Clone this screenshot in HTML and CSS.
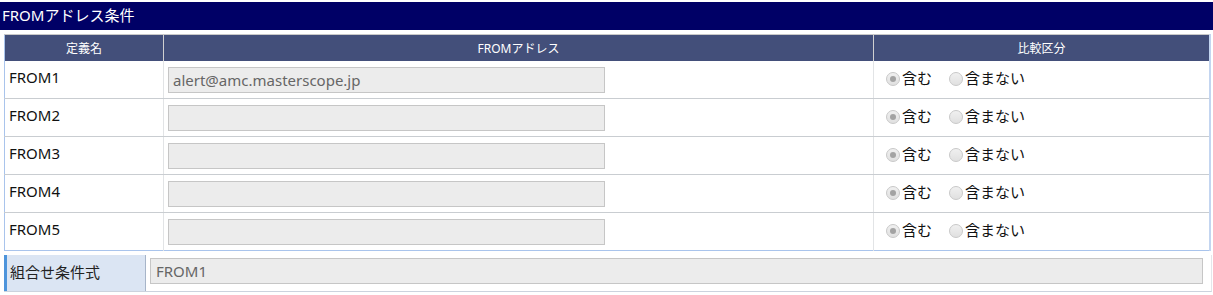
FILE: index.html
```html
<!DOCTYPE html>
<html lang="ja">
<head>
<meta charset="utf-8">
<link rel="stylesheet" href="styles.css">
</head>
<body>
<div class="title">FROMアドレス条件</div>
<table class="grid">
  <thead>
    <tr><th class="c1">定義名</th><th class="c2">FROMアドレス</th><th class="c3">比較区分</th></tr>
  </thead>
  <tbody>
    <tr><td class="name">FROM1</td><td><div class="field">alert@amc.masterscope.jp</div></td><td class="opts"><span class="radio on"></span><span class="rl">含む</span><span class="radio"></span><span class="rl">含まない</span></td></tr>
    <tr><td class="name">FROM2</td><td><div class="field"></div></td><td class="opts"><span class="radio on"></span><span class="rl">含む</span><span class="radio"></span><span class="rl">含まない</span></td></tr>
    <tr><td class="name">FROM3</td><td><div class="field"></div></td><td class="opts"><span class="radio on"></span><span class="rl">含む</span><span class="radio"></span><span class="rl">含まない</span></td></tr>
    <tr><td class="name">FROM4</td><td><div class="field"></div></td><td class="opts"><span class="radio on"></span><span class="rl">含む</span><span class="radio"></span><span class="rl">含まない</span></td></tr>
    <tr><td class="name">FROM5</td><td><div class="field"></div></td><td class="opts"><span class="radio on"></span><span class="rl">含む</span><span class="radio"></span><span class="rl">含まない</span></td></tr>
  </tbody>
</table>
<div class="combo">
  <div class="combo-label">組合せ条件式</div>
  <div class="combo-value"><div class="field wide">FROM1</div></div>
</div>
</body>
</html>
```
FILE: styles.css
```css
html, body {
  margin: 0;
  padding: 0;
  background: #ffffff;
  font-family: "Noto Sans", "Noto Sans CJK JP", sans-serif;
  color: #111;
}
.title {
  margin-top: 2px;
  height: 28px;
  line-height: 26px;
  background: #000066;
  color: #ffffff;
  font-size: 15px;
  padding-left: 2px;
}
.grid {
  margin: 4px 0 0 4px;
  width: 1207px;
  border-collapse: collapse;
  table-layout: fixed;
  border-left: 1px solid #a9c4ec;
  border-right: 2px solid #c3d5f0;
  border-bottom: 1px solid #a9c4ec;
}
.grid th {
  height: 26px;
  background: #434f7a;
  color: #ffffff;
  font-size: 12px;
  font-weight: normal;
  border-top: 1px solid #c8c8c8;
  border-left: 1px solid #d0d0d0;
  padding: 0;
}
.grid th.c1 { width: 158px; border-left: none; }
.grid th.c2 { width: 709px; }
.grid td {
  height: 37px;
  padding: 0;
  border-bottom: 1px solid #c9cdd1;
  border-left: 1px solid #e2e4e6;
  vertical-align: middle;
  font-size: 15px;
}
.grid tr:last-child td { border-bottom: none; }
.grid td.name {
  border-left: none;
  padding-left: 4px;
  padding-bottom: 5px;
  height: 32px;
}
.grid td.opts {
  padding-bottom: 4px;
  height: 33px;
}
.field {
  box-sizing: border-box;
  margin-left: 4px;
  width: 437px;
  height: 26px;
  background: #ececec;
  border: 1px solid #c6c6c6;
  color: #666;
  font-size: 15px;
  line-height: 24px;
  padding-left: 4px;
}
.radio {
  display: inline-block;
  box-sizing: border-box;
  width: 14px;
  height: 14px;
  border-radius: 50%;
  border: 1px solid #c9c9c9;
  background: linear-gradient(#f0f0f0, #e0e0e0);
  vertical-align: -2px;
  margin-left: 12px;
  position: relative;
}
.radio + .rl + .radio { margin-left: 17px; }
.radio.on::after {
  content: "";
  position: absolute;
  left: 3px;
  top: 3px;
  width: 6px;
  height: 6px;
  border-radius: 50%;
  background: #a3a3a3;
}
.rl {
  margin-left: 2px;
  font-size: 15px;
  color: #111;
}
.combo {
  margin: 4px 0 0 4px;
  width: 1208px;
  height: 37px;
  display: flex;
  border-bottom: 1px solid #ccd3de;
  border-right: 1px solid #e4e6ea;
  box-sizing: border-box;
}
.combo-label {
  width: 135px;
  height: 36px;
  background: #dbe5f3;
  border-left: 3px solid #4d94db;
  border-right: 1px solid #a7b5c9;
  font-size: 15px;
  color: #222;
  padding-left: 3px;
  line-height: 34px;
}
.combo-value {
  flex: 1;
  padding: 3px 0 0 4px;
}
.field.wide {
  margin-left: 0;
  width: 1053px;
  height: 26px;
  padding-left: 5px;
}
```
